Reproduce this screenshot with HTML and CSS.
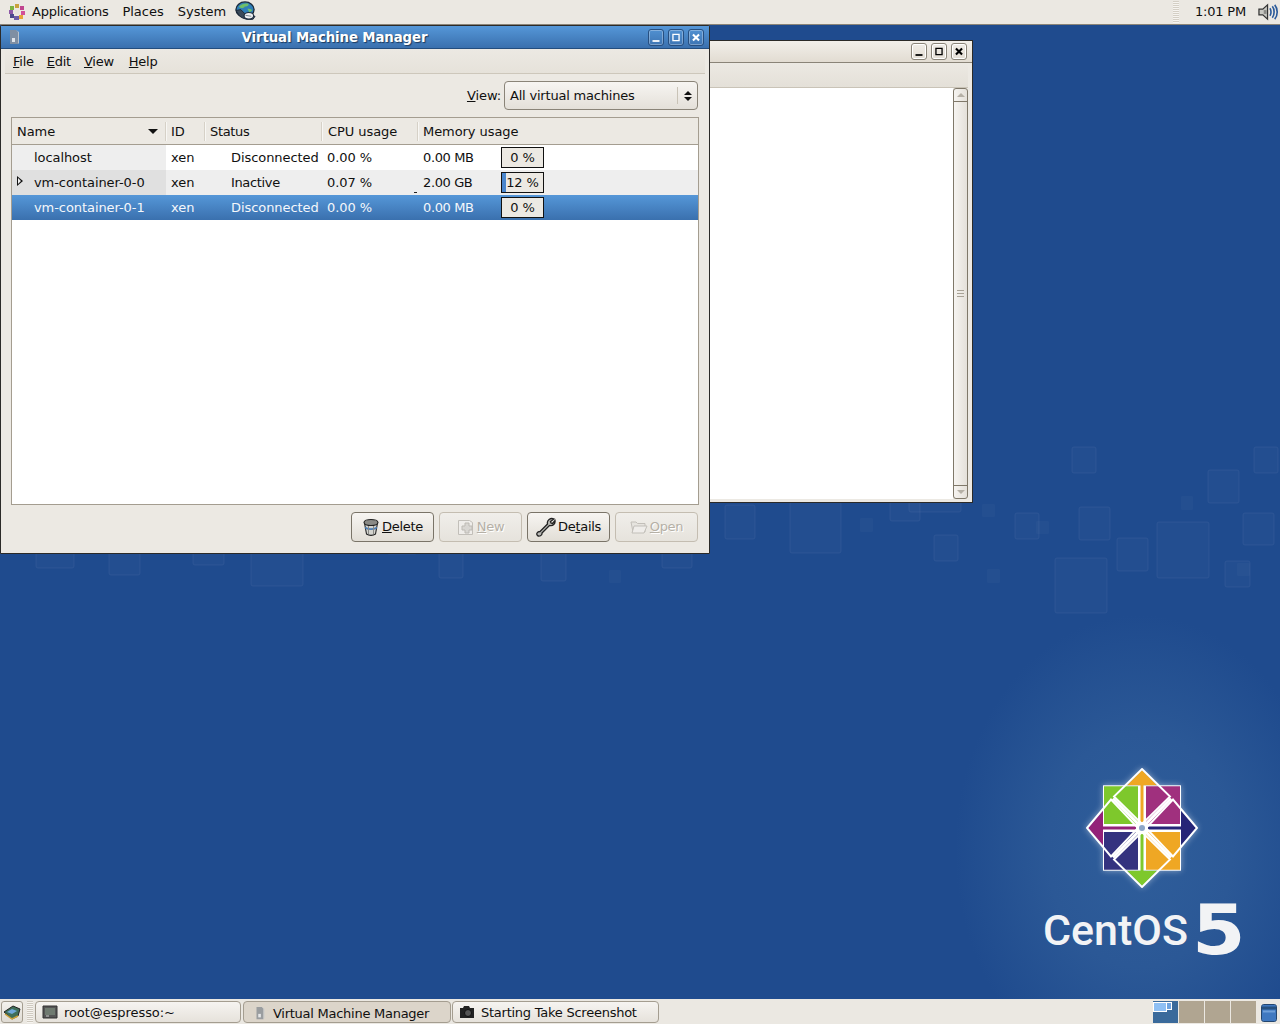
FILE: index.html
```html
<!DOCTYPE html>
<html lang="en">
<head>
  <meta charset="UTF-8">
  <title>Virtual Machine Manager</title>
  <link rel="stylesheet" href="styles.css">
</head>
<body>
  <!-- top panel -->
  <div class="top-panel">
    <svg class="foot-icon" viewBox="0 0 18 18">
      <path d="M7 1h4v4H7z" fill="#c9a23c"/>
      <path d="M12 3h4v4h-4z" fill="#c0458e"/>
      <path d="M13 8h4v4h-4z" fill="#d24f9a"/>
      <path d="M11 12h4v4h-4z" fill="#e8a33a"/>
      <path d="M6 13h5v4H6z" fill="#6f5fa8"/>
      <path d="M2 11h4v4H2z" fill="#4d4a8c"/>
      <path d="M1 7h4v4H1z" fill="#8e5aa8"/>
      <path d="M2 3h4v4H2z" fill="#7cb342"/>
      <path d="M7 7h4v4H7z" fill="#e8e4dc"/>
    </svg>
    <span class="panel-menu first">Applications</span>
    <span class="panel-menu">Places</span>
    <span class="panel-menu">System</span>
    <svg class="globe-icon" viewBox="0 0 22 22">
      <ellipse cx="10.500" cy="9" rx="9.500" ry="8" fill="#2f7fb8" stroke="#1c2a3a" stroke-width="1.400"/>
      <path d="M4 6c3-3 7-4 10-3 1 2-2 3-4 3-1 2-4 2-6 0z" fill="#6fbf68"/>
      <path d="M13 8c2 0 4 0 5 2l-3 2z" fill="#6fbf68"/>
      <path d="M1 10l4 6c4 3 9 4 14 3l2-3-9-1-6-6z" fill="#3a4a5a" stroke="#1c2a3a" stroke-width="1"/>
      <ellipse cx="14.500" cy="15.500" rx="5" ry="3.500" fill="#eef0f2" stroke="#1c2a3a" stroke-width="1.200"/>
      <path d="M11 15l6 1" stroke="#7a8590" stroke-width="1"/>
    </svg>
    <div class="panel-spacer"></div>
    <div class="clock-handle"></div>
    <span class="clock">1:01 PM</span>
    <svg class="volume-icon" viewBox="0 0 22 18">
      <path d="M1 6h4l5-4.500v15l-5-4.500H1z" fill="#c8c8c2" stroke="#333" stroke-width="1.300"/>
      <path d="M6 7h3v4H6z" fill="#8a8a86"/>
      <path d="M12.500 5c1.500 2 1.500 6 0 8M15 3c2.500 3 2.500 9 0 12M17.500 1.500c3.500 4 3.500 11 0 15" fill="none" stroke="#2a5a9a" stroke-width="1.700"/>
    </svg>
  </div>

  <div class="desktop">
    <!-- wallpaper squares, in screen coordinates -->
    <svg class="wallpaper" viewBox="0 25 1280 974">
      <rect class="sq" x="36" y="530" width="38" height="38" rx="2"/>
      <rect class="sq" x="109" y="540" width="31" height="35" rx="2"/>
      <rect class="sq" x="193" y="530" width="31" height="35" rx="2"/>
      <rect class="sq" x="251" y="530" width="52" height="56" rx="2"/>
      <rect class="sq" x="387" y="530" width="30" height="24" rx="2"/>
      <rect class="sq" x="439" y="540" width="24" height="38" rx="2"/>
      <rect class="sq" x="541" y="550" width="25" height="31" rx="2"/>
      <rect class="sq dim" x="609" y="570" width="12" height="13" rx="1"/>
      <rect class="sq" x="662" y="540" width="30" height="28" rx="2"/>
      <rect class="sq" x="725" y="505" width="30" height="34" rx="2"/>
      <rect class="sq" x="790" y="502" width="51" height="51" rx="2"/>
      <rect class="sq dim" x="860" y="518" width="13" height="14" rx="1"/>
      <rect class="sq" x="890" y="495" width="30" height="26" rx="2"/>
      <rect class="sq" x="909" y="490" width="52" height="22" rx="2"/>
      <rect class="sq" x="934" y="535" width="24" height="26" rx="2"/>
      <rect class="sq dim" x="982" y="504" width="13" height="13" rx="1"/>
      <rect class="sq dim" x="987" y="569" width="13" height="14" rx="1"/>
      <rect class="sq" x="1015" y="513" width="24" height="26" rx="2"/>
      <rect class="sq dim" x="1036" y="521" width="13" height="13" rx="1"/>
      <rect class="sq" x="1055" y="558" width="52" height="55" rx="2"/>
      <rect class="sq" x="1072" y="447" width="24" height="26" rx="2"/>
      <rect class="sq" x="1079" y="507" width="31" height="33" rx="2"/>
      <rect class="sq" x="1117" y="538" width="31" height="33" rx="2"/>
      <rect class="sq" x="1157" y="522" width="52" height="56" rx="2"/>
      <rect class="sq dim" x="1181" y="496" width="12" height="14" rx="1"/>
      <rect class="sq" x="1208" y="470" width="31" height="33" rx="2"/>
      <rect class="sq" x="1225" y="561" width="25" height="26" rx="2"/>
      <rect class="sq dim" x="1237" y="563" width="13" height="13" rx="1"/>
      <rect class="sq" x="1243" y="513" width="31" height="32" rx="2"/>
      <rect class="sq" x="1254" y="447" width="24" height="26" rx="2"/>
    </svg>

    <!-- CentOS mark -->
    <svg class="centos-logo" viewBox="-56 -59 112 118" preserveAspectRatio="none">
      <rect x="-39" y="-42" width="78" height="84" fill="#fff"/>
      <!-- tips -->
      <path d="M0-57L15-42H-15z" fill="#efa724"/>
      <path d="M54 0L39 17V-17z" fill="#262577"/>
      <path d="M0 57L15 42H-15z" fill="#7ec82c"/>
      <path d="M-54 0L-39 17V-17z" fill="#932279"/>
      <!-- quadrants -->
      <path d="M-38-41H-4V-4H-38z" fill="#7ec82c"/>
      <path d="M4-41H38V-4H4z" fill="#a0307e"/>
      <path d="M4 4H38V41H4z" fill="#efa724"/>
      <path d="M-38 4H-4V41H-38z" fill="#34327f"/>
      <!-- shafts -->
      <path d="M-1.500-44H1.500V-6H-1.500z" fill="#efa724"/>
      <path d="M6-1.500H41V1.500H6z" fill="#262577"/>
      <path d="M-1.500 6H1.500V44H-1.500z" fill="#7ec82c"/>
      <path d="M-41-1.500H-6V1.500H-41z" fill="#932279"/>
      <!-- rotated squares -->
      <g fill="none" stroke="#fff" stroke-width="1.900">
        <path d="M0-58L28-31 0-4-28-31z"/>
        <path d="M0 58L28 31 0 4-28 31z"/>
        <path d="M-55 0L-31-28-4 0-31 28z"/>
        <path d="M55 0L31-28 4 0 31 28z"/>
      </g>
      <g stroke="#fff" stroke-width="3">
        <path d="M-29-29L-4-4M29-29L4-4M-29 29L-4 4M29 29L4 4"/>
      </g>
      <circle r="3" fill="#8da6c8"/>
    </svg>
    <div class="centos-word">CentOS</div>
    <div class="centos-five">5</div>

    <!-- window behind -->
    <div class="window back-window">
      <div class="back-title">
        <span class="wm-btn light"><svg viewBox="0 0 16 16"><path d="M4 12h8" stroke="#000" stroke-width="2"/></svg></span>
        <span class="wm-btn light"><svg viewBox="0 0 16 16"><path d="M4.500 4.500h7v7h-7z" fill="none" stroke="#000" stroke-width="1.500"/></svg></span>
        <span class="wm-btn light"><svg viewBox="0 0 16 16"><path d="M4.500 4.500l7 7m0-7l-7 7" stroke="#000" stroke-width="2.400"/></svg></span>
      </div>
      <div class="back-menu"></div>
      <div class="back-body">
        <div class="back-text"></div>
        <div class="scrollbar">
          <div class="scroll-end top"><span class="arrow-up"></span></div>
          <div class="scroll-thumb"><span class="grip"></span></div>
          <div class="scroll-end bottom"><span class="arrow-down"></span></div>
        </div>
      </div>
    </div>

    <!-- main window -->
    <div class="window main-window">
      <div class="title-bar">
        <svg class="title-icon" viewBox="0 0 14 16">
          <path d="M3 1h6l2 2v12H3z" fill="#7f8fa3"/>
          <path d="M9 1l3 2v11l-1 1V3z" fill="#b9c2cc"/>
          <path d="M5 9h3v4H5z" fill="#dfe4ea"/>
        </svg>
        <div class="title-text">Virtual Machine Manager</div>
        <span class="wm-btn"><svg viewBox="0 0 16 16"><path d="M4 12h8" stroke="#fff" stroke-width="2"/></svg></span>
        <span class="wm-btn"><svg viewBox="0 0 16 16"><path d="M4.500 4.500h7v7h-7z" fill="none" stroke="#fff" stroke-width="1.500"/></svg></span>
        <span class="wm-btn"><svg viewBox="0 0 16 16"><path d="M4.500 4.500l7 7m0-7l-7 7" stroke="#fff" stroke-width="2.400"/></svg></span>
      </div>

      <div class="menu-bar">
        <span class="menu-item"><u>F</u>ile</span>
        <span class="menu-item"><u>E</u>dit</span>
        <span class="menu-item"><u>V</u>iew</span>
        <span class="menu-item help"><u>H</u>elp</span>
      </div>

      <div class="view-row">
        <span class="view-label"><u>V</u>iew:</span>
        <div class="combo">
          <span class="combo-text">All virtual machines</span>
          <span class="combo-arrows"><span class="arrow-up dark"></span><span class="arrow-down dark"></span></span>
        </div>
      </div>

      <div class="vm-table">
        <div class="vm-row vm-head">
          <div class="cell name-head">Name<span class="sort-arrow"></span></div>
          <div class="cell">ID</div>
          <div class="cell tight">Status</div>
          <div class="cell cpu-head">CPU usage</div>
          <div class="cell">Memory usage</div>
        </div>
        <div class="vm-row">
          <div class="cell name">localhost</div>
          <div class="cell">xen</div>
          <div class="cell status">Disconnected</div>
          <div class="cell">0.00 %</div>
          <div class="cell mem"><span class="mem-val">0.00 MB</span><span class="bar">0 %</span></div>
        </div>
        <div class="vm-row odd">
          <div class="cell name"><span class="expander"></span>vm-container-0-0</div>
          <div class="cell">xen</div>
          <div class="cell status tight">Inactive</div>
          <div class="cell">0.07 %</div>
          <div class="cell mem"><span class="tick"></span><span class="mem-val">2.00 GB</span><span class="bar"><span class="bar-fill" style="width:4px"></span><span class="bar-label">12 %</span></span></div>
        </div>
        <div class="vm-row selected">
          <div class="cell name">vm-container-0-1</div>
          <div class="cell">xen</div>
          <div class="cell status">Disconnected</div>
          <div class="cell">0.00 %</div>
          <div class="cell mem"><span class="mem-val">0.00 MB</span><span class="bar">0 %</span></div>
        </div>
      </div>

      <div class="button-row">
        <div class="btn">
          <svg class="btn-icon" viewBox="0 0 18 18">
            <path d="M2.500 5l2 11c2.500 1.800 6.500 1.800 9 0l2-11z" fill="#d4d4cf" stroke="#222" stroke-width="1.100"/>
            <ellipse cx="9" cy="4.500" rx="7" ry="3" fill="#8a8a86" stroke="#222" stroke-width="1.100"/>
            <path d="M3 9.500c3.500 2 8.500 2 12 0" fill="none" stroke="#4f7fb5" stroke-width="1.800"/>
            <path d="M6.500 8v8M11.500 8v8" stroke="#8a8a86" stroke-width="1"/>
          </svg>
          <span><u>D</u>elete</span>
        </div>
        <div class="btn off">
          <svg class="btn-icon" viewBox="0 0 18 18">
            <path d="M1.500 2.500h11l3 2v12h-14z" fill="#efedea" stroke="#c2bfb9"/>
            <path d="M8 5h4v3h3v4h-3v3H8v-3H5V8h3z" fill="#d8d6d2" stroke="#bdbab4"/>
          </svg>
          <span><u>N</u>ew</span>
        </div>
        <div class="btn">
          <svg class="btn-icon wrench" viewBox="0 0 20 20">
            <path d="M18 2l-3.500 2.500 0.500 1.500 1.500 0.500L19 3.500c0.500 3-2 6-5.500 5L6 16c0.500 2.500-3 4-4.500 2.500S1 14.500 4 14.500L11.500 7C10.500 3 14.500 0.500 18 2z" fill="#b8b8b4" stroke="#222" stroke-width="1.300"/>
          </svg>
          <span>De<u>t</u>ails</span>
        </div>
        <div class="btn off">
          <svg class="btn-icon" viewBox="0 0 18 18">
            <path d="M1 4h5l1.500 1.500H15V14H3z" fill="#e6e4df" stroke="#c2bfb9"/>
            <path d="M4 8h13l-3 7H2z" fill="#efedea" stroke="#c2bfb9"/>
          </svg>
          <span><u>O</u>pen</span>
        </div>
      </div>
    </div>
  </div>

  <!-- bottom panel -->
  <div class="bottom-panel">
    <div class="show-desktop">
      <svg viewBox="0 0 18 18">
        <path d="M1 9l9-6 7 3-2 7-6 3z" fill="#3f6f5a" stroke="#222"/>
        <path d="M4 9l5-3 5 2-5 3z" fill="#6fa8dc"/>
        <path d="M2 11l7 5 6-3" fill="none" stroke="#c9a23c" stroke-width="1.500"/>
      </svg>
    </div>
    <div class="task-handle"></div>
    <div class="task">
      <svg class="task-icon" viewBox="0 0 16 14">
        <path d="M1 1h14v12H1z" fill="#555" stroke="#333"/>
        <path d="M3 3h10v7H3z" fill="#6f7a70"/>
        <path d="M4 11h3" stroke="#ccc"/>
      </svg>
      <span>root@espresso:~</span>
    </div>
    <div class="task active">
      <svg class="task-icon" viewBox="0 0 14 16">
        <path d="M3 1h6l2 2v12H3z" fill="#9a9d9f"/>
        <path d="M9 1l3 2v11l-1 1V3z" fill="#c8cacb"/>
        <path d="M5 9h3v4H5z" fill="#e6e7e8"/>
      </svg>
      <span>Virtual Machine Manager</span>
    </div>
    <div class="task last">
      <svg class="task-icon" viewBox="0 0 16 14">
        <path d="M1 3h3l1-2h5l1 2h4v10H1z" fill="#222"/>
        <circle cx="9" cy="8" r="3.500" fill="#555" stroke="#111"/>
      </svg>
      <span>Starting Take Screenshot</span>
    </div>
    <div class="panel-spacer"></div>
    <div class="pager">
      <div class="workspace current"><span class="ws-win big"></span><span class="ws-win small"></span></div>
      <div class="workspace"></div>
      <div class="workspace"></div>
      <div class="workspace"></div>
    </div>
    <svg class="trash-icon" viewBox="0 0 18 18">
      <path d="M1.500 3c0-1 1-2 2-2h11c1 0 2 1 2 2v13c0 1-1 2-2 2h-11c-1 0-2-1-2-2z" fill="#3f78c0" stroke="#24466f"/>
      <path d="M2 3h14v3H2z" fill="#26507f"/>
      <path d="M3 7h12v2H3z" fill="#6f9fd8"/>
    </svg>
  </div>
</body>
</html>
```

FILE: styles.css
```css
* {
  box-sizing: border-box;
}

html, body {
  margin: 0;
  padding: 0;
}

body {
  width: 1280px;
  height: 1024px;
  overflow: hidden;
  display: flex;
  flex-direction: column;
  font-family: "DejaVu Sans", sans-serif;
  font-size: 13px;
  color: #101010;
  background: #1f4b8e;
}

svg {
  display: block;
}

/* panels */
.top-panel {
  height: 25px;
  flex: none;
  display: flex;
  align-items: center;
  background: #ebe8e2;
  border-bottom: 1px solid #8a8478;
  padding-bottom: 1px;
}

.foot-icon {
  width: 18px;
  height: 18px;
  margin-left: 8px;
}

.panel-menu {
  margin-left: 14px;
}

.panel-menu.first {
  margin-left: 6px;
  letter-spacing: -0.25px;
}

.globe-icon {
  width: 21px;
  height: 21px;
  margin-left: 9px;
}

.panel-spacer {
  flex: 1;
}

.clock-handle {
  width: 6px;
  height: 22px;
  background: repeating-linear-gradient(#d4cfc5 0 1px, #f6f4f0 1px 2px);
  margin-right: 16px;
}

.clock {
  margin-right: 12px;
  letter-spacing: -0.2px;
}

.volume-icon {
  width: 21px;
  height: 18px;
  margin-right: 1px;
}

.bottom-panel {
  height: 25px;
  flex: none;
  display: flex;
  align-items: center;
  background: #ebe8e2;
  padding: 1px 2px 0 1px;
}

.show-desktop {
  width: 22px;
  height: 22px;
  border: 1px solid #a49d90;
  border-radius: 3px;
  padding: 1px;
  background: linear-gradient(#f4f2ee, #dfdbd3);
}

.task-handle {
  width: 6px;
  height: 22px;
  margin: 0 2px 0 4px;
  background: repeating-linear-gradient(#cfcac0 0 1px, #f6f4f0 1px 2px);
}

.task {
  height: 22px;
  width: 206px;
  margin-right: 2px;
  display: flex;
  align-items: center;
  border: 1px solid #a49d90;
  border-radius: 4px;
  background: linear-gradient(#f6f4f1, #e6e2db);
  padding-left: 6px;
  gap: 6px;
  letter-spacing: -0.07px;
}

.task.active {
  width: 208px;
  margin-right: 1px;
  background: #dcd5ca;
  padding-top: 2px;
  padding-left: 8px;
  gap: 5px;
  letter-spacing: -0.26px;
}

.task.last {
  width: 207px;
  letter-spacing: -0.25px;
}

.task-icon {
  width: 16px;
  height: 14px;
  flex: none;
}

.pager {
  display: flex;
  gap: 1px;
  height: 22px;
}

.workspace {
  width: 25px;
  background: #b0a591;
  position: relative;
}

.workspace.current {
  background: #3a6a9b;
}

.ws-win {
  position: absolute;
  border: 1px solid #fff;
  background: #8fc0f4;
}

.ws-win.big {
  left: 0;
  top: 1px;
  width: 14px;
  height: 10px;
}

.ws-win.small {
  left: 13px;
  top: 1px;
  width: 6px;
  height: 8px;
  background: #6fa4e0;
}

.trash-icon {
  width: 18px;
  height: 19px;
  margin-left: 4px;
}

/* desktop and wallpaper */
.desktop {
  flex: 1;
  position: relative;
  overflow: hidden;
  background:
    radial-gradient(ellipse 185px 235px at 1140px 825px, #2f5e9b 0%, #2b5896 50%, rgba(31, 75, 142, 0) 100%),
    #1f4b8e;
}

.wallpaper {
  position: absolute;
  left: 0;
  top: 0;
  width: 1280px;
  height: 974px;
}

.sq {
  fill: rgba(255, 255, 255, 0.018);
  stroke: rgba(255, 255, 255, 0.055);
  stroke-width: 1;
}

.sq.dim {
  stroke: none;
  fill: rgba(255, 255, 255, 0.022);
}

.centos-logo {
  position: absolute;
  left: 1086px;
  top: 743px;
  width: 112px;
  height: 120px;
  filter: drop-shadow(0 0 3px rgba(255, 255, 255, 0.45));
}

.centos-word {
  position: absolute;
  left: 1043px;
  top: 877px;
  font-family: Roboto, sans-serif;
  font-size: 43px;
  line-height: 56px;
  font-weight: 500;
  color: #f2f3f5;
}

.centos-five {
  position: absolute;
  left: 1192px;
  top: 862px;
  font-family: "DejaVu Sans", sans-serif;
  font-size: 70px;
  line-height: 86px;
  font-weight: 700;
  color: #f2f3f5;
  transform: scaleX(1.1);
  transform-origin: left center;
}

/* windows */
.window {
  position: absolute;
  border: 1px solid #2b2a28;
  background: #ece9e3;
}

.main-window {
  left: 0;
  top: 0;
  width: 710px;
  height: 529px;
  display: flex;
  flex-direction: column;
  border-radius: 2px 2px 0 0;
}

.back-window {
  left: 660px;
  top: 15px;
  width: 313px;
  height: 463px;
  display: flex;
  flex-direction: column;
}

.title-bar {
  height: 23px;
  flex: none;
  display: flex;
  align-items: center;
  padding: 0 5px 0 6px;
  gap: 4px;
  background: linear-gradient(#5597d8, #3a70ae);
  border-bottom: 1px solid #234d7e;
}

.title-icon {
  width: 14px;
  height: 16px;
  flex: none;
}

.title-text {
  flex: 1;
  text-align: center;
  color: #fff;
  font-weight: 700;
  font-size: 13.300px;
  letter-spacing: -0.1px;
  text-shadow: 1px 1px 1px #1c3a5e;
}

.wm-btn {
  width: 16px;
  height: 17px;
  flex: none;
  border: 1px solid #274f80;
  border-radius: 3px;
  box-shadow: inset 0 0 0 1px rgba(255, 255, 255, 0.3);
  display: block;
}

.wm-btn.light {
  border-color: #8a8478;
  box-shadow: inset 0 0 0 1px #fff;
}

.wm-btn svg {
  width: 14px;
  height: 15px;
}

.back-title {
  height: 22px;
  flex: none;
  display: flex;
  justify-content: flex-end;
  align-items: center;
  gap: 4px;
  padding: 0 5px 0 0;
  background: linear-gradient(#f2efea, #e2dcd2);
  border-bottom: 1px solid #8a8478;
}

.back-menu {
  height: 25px;
  flex: none;
  margin-right: 4px;
  background: linear-gradient(#ece9e3, #e4e0d8);
  border-bottom: 1px solid #c9c3b7;
}

.back-body {
  flex: 1;
  display: flex;
  padding-bottom: 3px;
}

.back-text {
  flex: 1;
  background: #fff;
}

.scrollbar {
  width: 15px;
  margin-right: 4px;
  display: flex;
  flex-direction: column;
  border: 1px solid #7f7869;
  border-radius: 3px;
  background: linear-gradient(90deg, #f6f4f1, #e4e0d9);
}

.scroll-end {
  height: 13px;
  flex: none;
  display: flex;
  align-items: center;
  justify-content: center;
}

.scroll-end.top {
  border-bottom: 1px solid #7f7869;
}

.scroll-end.bottom {
  border-top: 1px solid #7f7869;
}

.scroll-thumb {
  flex: 1;
  display: flex;
  align-items: center;
  justify-content: center;
}

.grip {
  width: 7px;
  height: 7px;
  background: repeating-linear-gradient(#a8a296 0 1px, transparent 1px 3px);
}

.arrow-up, .arrow-down {
  width: 0;
  height: 0;
  border-left: 4px solid transparent;
  border-right: 4px solid transparent;
  display: block;
}

.arrow-up {
  border-bottom: 4px solid #b5b0a6;
}

.arrow-down {
  border-top: 4px solid #b5b0a6;
}

.arrow-up.dark {
  border-bottom-color: #111;
}

.arrow-down.dark {
  border-top-color: #111;
}

/* main window contents */
.menu-bar {
  height: 25px;
  flex: none;
  margin: 0 4px 0 4px;
  display: flex;
  align-items: center;
  padding-left: 8px;
  gap: 13px;
  background: linear-gradient(#ece9e3, #e6e2da);
  border-bottom: 1px solid #cdc7bb;
}

.menu-item {
  letter-spacing: -0.25px;
}

.menu-item.help {
  margin-left: 2px;
}

.view-row {
  height: 37px;
  flex: none;
  display: flex;
  align-items: center;
  justify-content: flex-end;
  padding: 6px 11px 0 0;
  gap: 3px;
}

.view-label {
  letter-spacing: -0.1px;
}

.combo {
  width: 194px;
  height: 29px;
  display: flex;
  align-items: center;
  justify-content: space-between;
  border: 1px solid #8a8478;
  border-radius: 4px;
  background: linear-gradient(#f7f5f2, #e4e0d9);
  padding-left: 5px;
}

.combo-text {
  letter-spacing: -0.2px;
}

.combo-arrows {
  width: 20px;
  height: 17px;
  display: flex;
  flex-direction: column;
  justify-content: center;
  align-items: center;
  gap: 2px;
  border-left: 1px solid #c9c3b7;
}

.vm-table {
  flex: none;
  width: 688px;
  height: 388px;
  margin: 6px 0 0 10px;
  border: 1px solid #a49d90;
  background: #fff;
  letter-spacing: -0.07px;
}

.vm-row {
  display: grid;
  grid-template-columns: 154px 39px 117px 96px 1fr;
  height: 25px;
  align-items: center;
}

.vm-head {
  height: 27px;
  background: #ece9e3;
  border-bottom: 1px solid #a49d90;
  margin-bottom: 0;
}

.vm-head .cell {
  padding-left: 5px;
  height: 19px;
  line-height: 19px;
  border-right: 1px solid #d6d1c7;
  box-shadow: 1px 0 0 #f8f7f4;
}

.vm-head .cell:last-child {
  border-right: none;
  box-shadow: none;
}

.vm-head .cpu-head {
  padding-left: 6px;
}

.vm-head .name-head {
  position: relative;
}

.sort-arrow {
  position: absolute;
  right: 7px;
  top: 7px;
  width: 0;
  height: 0;
  border-left: 5px solid transparent;
  border-right: 5px solid transparent;
  border-top: 5px solid #111;
}

.cell {
  padding-left: 5px;
  white-space: nowrap;
  position: relative;
}

.cell.tight {
  letter-spacing: -0.35px;
}

.cell.name {
  padding-left: 22px;
  height: 100%;
  line-height: 25px;
  background: #eeeeee;
}

.cell.status {
  padding-left: 26px;
}

.vm-row.odd {
  background: #eeeeee;
}

.vm-row.odd .cell.name {
  background: #e0e0e0;
}

.vm-row.selected {
  color: #f4f7fb;
  background: linear-gradient(#5597d8, #3a70ae);
}

.vm-row.selected .cell.name {
  background: none;
}

.expander {
  position: absolute;
  left: 5px;
  top: 6px;
  width: 0;
  height: 0;
  border-left: 6px solid #111;
  border-top: 5px solid transparent;
  border-bottom: 5px solid transparent;
}

.expander::after {
  content: "";
  position: absolute;
  left: -5px;
  top: -3px;
  width: 0;
  height: 0;
  border-left: 3.500px solid #eee;
  border-top: 3px solid transparent;
  border-bottom: 3px solid transparent;
}

.mem {
  display: flex;
  align-items: center;
}

.mem-val {
  width: 78px;
  letter-spacing: -0.38px;
}

.tick {
  position: absolute;
  left: -4px;
  top: 20px;
  width: 3px;
  height: 1px;
  background: #222;
}

.bar {
  width: 43px;
  height: 21px;
  border: 1.500px solid #111;
  background: #ece9e3;
  color: #111;
  position: relative;
  text-align: center;
  line-height: 20px;
}

.bar-fill {
  position: absolute;
  left: 0;
  top: 0;
  bottom: 0;
  background: #4a86cc;
}

.bar-label {
  position: relative;
}

.button-row {
  flex: none;
  display: flex;
  justify-content: flex-end;
  gap: 5px;
  margin-top: 7px;
  padding-right: 11px;
}

.btn {
  width: 83px;
  height: 30px;
  display: flex;
  align-items: center;
  justify-content: center;
  gap: 2px;
  padding-bottom: 1px;
  border: 1px solid #7a7468;
  border-radius: 4px;
  background: linear-gradient(#f7f5f2, #e2ded6);
  letter-spacing: -0.3px;
}

.btn.off {
  border-color: #c4bdb1;
  color: #b5b0a6;
  text-shadow: 1px 1px 0 #fff;
  background: linear-gradient(#f0eeea, #e6e3dc);
}

.btn-icon {
  width: 18px;
  height: 18px;
  flex: none;
}

.btn-icon.wrench {
  width: 20px;
  height: 20px;
}
```
